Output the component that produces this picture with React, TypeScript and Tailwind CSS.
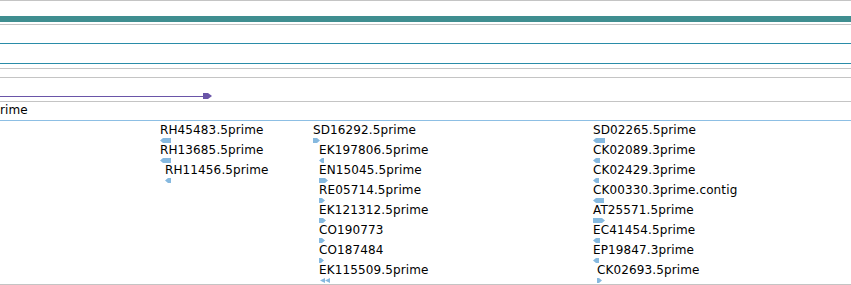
import React from 'react';

type Feat = {
  name: string;
  indent: number;
  dir: 'l' | 'r' | 'll';
  w: number;
  gx?: number;
};

const col1: Feat[] = [
  { name: 'RH45483.5prime', indent: 0, dir: 'l', w: 11 },
  { name: 'RH13685.5prime', indent: 0, dir: 'l', w: 11 },
  { name: 'RH11456.5prime', indent: 5, dir: 'l', w: 6 },
];

const col2: Feat[] = [
  { name: 'SD16292.5prime', indent: 0, dir: 'r', w: 7 },
  { name: 'EK197806.5prime', indent: 6, dir: 'l', w: 5 },
  { name: 'EN15045.5prime', indent: 6, dir: 'r', w: 9 },
  { name: 'RE05714.5prime', indent: 6, dir: 'r', w: 6 },
  { name: 'EK121312.5prime', indent: 6, dir: 'r', w: 7 },
  { name: 'CO190773', indent: 6, dir: 'r', w: 6 },
  { name: 'CO187484', indent: 6, dir: 'r', w: 5 },
  { name: 'EK115509.5prime', indent: 6, dir: 'll', w: 11, gx: 1 },
];

const col3: Feat[] = [
  { name: 'SD02265.5prime', indent: 0, dir: 'l', w: 12 },
  { name: 'CK02089.3prime', indent: 0, dir: 'l', w: 7 },
  { name: 'CK02429.3prime', indent: 0, dir: 'l', w: 6 },
  { name: 'CK00330.3prime.contig', indent: 0, dir: 'l', w: 11 },
  { name: 'AT25571.5prime', indent: 0, dir: 'r', w: 12 },
  { name: 'EC41454.5prime', indent: 0, dir: 'l', w: 7 },
  { name: 'EP19847.3prime', indent: 0, dir: 'l', w: 6 },
  { name: 'CK02693.5prime', indent: 4, dir: 'r', w: 5 },
];

const Glyph = ({ dir, w }: { dir: Feat['dir']; w: number }) => {
  let pts = '';
  if (dir === 'l') pts = `3,0 ${w},0 ${w},5 3,5 0,2.5`;
  if (dir === 'r') pts = `0,0 ${w - 3},0 ${w},2.5 ${w - 3},5 0,5`;
  return (
    <svg width={w} height={5} viewBox={`0 0 ${w} 5`} className="block">
      {dir === 'll' ? (
        <>
          <polygon points="0,2.5 5,0 5,5" fill="#86b9df" />
          <polygon points="5,2.5 10,0 10,5" fill="#86b9df" />
        </>
      ) : (
        <polygon points={pts} fill="#86b9df" />
      )}
    </svg>
  );
};

const Column = ({ items, className }: { items: Feat[]; className: string }) => (
  <div className={className}>
    {items.map((f) => (
      <div key={f.name} className="h-[20px]" style={{ paddingLeft: f.indent }}>
        <div className="h-[13px] leading-[13px] whitespace-nowrap tracking-[0.12px]">{f.name}</div>
        <div className="mt-[1px]" style={{ marginLeft: f.gx ?? 0 }}>
          <Glyph dir={f.dir} w={f.w} />
        </div>
      </div>
    ))}
  </div>
);

export default function App() {
  return (
    <div className="w-[851px] h-[285px] bg-white overflow-hidden text-[12px] text-black font-['DejaVu_Sans',sans-serif]">
      <div className="h-px bg-[#c4c4c4]" />
      <div className="h-[15px]" />
      <div className="h-[6px] bg-[#3f8e90]" />
      <div className="h-[2px]" />
      <div className="h-px bg-[#c4c4c4]" />
      <div className="h-[18px]" />
      <div className="h-px bg-[#2a8ca8]" />
      <div className="h-[19px]" />
      <div className="h-px bg-[#2a8ca8]" />
      <div className="h-[4px]" />
      <div className="h-px bg-[#c4c4c4]" />
      <div className="h-[8px]" />
      <div className="h-px bg-[#c4c4c4]" />

      <div className="h-[23px] pt-[15px]">
        <svg width={212} height={6} viewBox="0 0 212 6" className="block">
          <rect x={0} y={3} width={204} height={1} fill="#6a55a8" />
          <polygon points="203,0 208,0 212,3 208,6 203,6" fill="#6a55a8" />
        </svg>
      </div>
      <div className="h-px bg-[#c4c4c4]" />

      <div className="h-[18px] pt-[1px] leading-[14px] tracking-[0.12px]">rime</div>
      <div className="h-px bg-[#8dbfe4]" />

      <div className="h-[163px] pt-[3px] flex pl-[160px]">
        <Column items={col1} className="w-[153px]" />
        <Column items={col2} className="w-[280px]" />
        <Column items={col3} className="w-[200px]" />
      </div>
      <div className="h-px bg-[#c4c4c4]" />
    </div>
  );
}
